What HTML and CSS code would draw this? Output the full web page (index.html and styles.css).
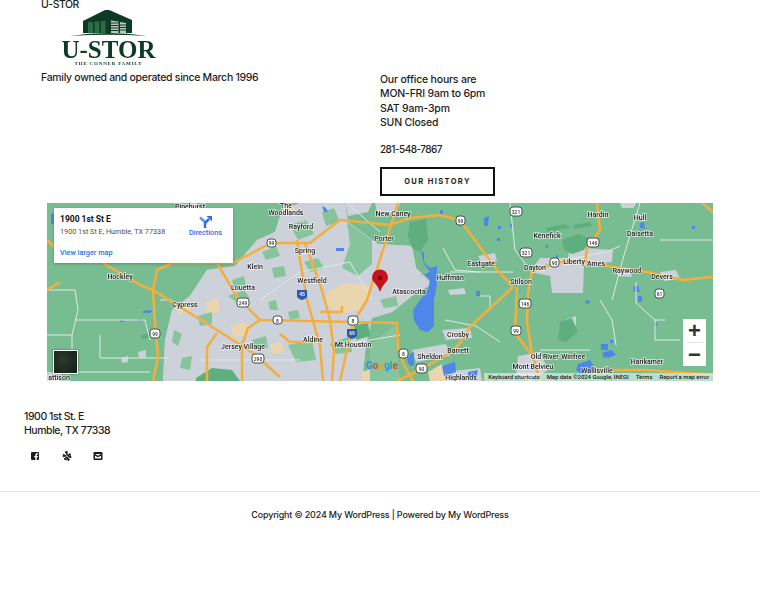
FILE: index.html
```html
<!DOCTYPE html>
<html lang="en">
<head>
    <meta charset="UTF-8">
    <meta name="viewport" content="width=device-width, initial-scale=1.0">
    <title>U-STOR</title>
    <link rel="stylesheet" href="styles.css">
</head>
<body>
    <div class="intro">
        <div class="intro-left">
            <div class="site-title">U-STOR</div>
            <svg class="logo" viewBox="62 10 94 56" width="94" height="56">
                <path class="logo-dark" d="M83 21L107 9 132 20V33H83Z"/>
                <path class="logo-dark" d="M70 36Q108 30 147 36 108 33.500 70 36Z"/>
                <path class="logo-win" d="M88 22h5v11h-5zM94.500 21.500h5V33h-5zM101 21h4.500V33H101z"/>
                <path class="logo-light" d="M111 20.500l7.500 1V33H111zM120 22l6 1V33h-6z"/>
                <path class="logo-line" d="M111 23h7.500M111 25.500h7.500M111 28h7.500M111 30.500h7.500M120 25h6M120 27.500h6M120 30h6"/>
                <text class="logo-name" x="108.500" y="57.500" text-anchor="middle">U-STOR</text>
                <text class="logo-sub" x="108.500" y="65" text-anchor="middle">THE CONNER FAMILY</text>
            </svg>
            <p class="tagline">Family owned and operated since March 1996</p>
        </div>
        <div class="intro-right">
            <p class="hours">Our office hours are<br>MON-FRI 9am to 6pm<br>SAT 9am-3pm<br>SUN Closed</p>
            <p class="phone">281-548-7867</p>
            <a class="history-btn" href="#">OUR HISTORY</a>
        </div>
    </div>

    <div class="map">
        <svg class="map-art" viewBox="47 203 666 178" width="666" height="178">
            <defs>
                <pattern id="streets" width="13" height="11" patternUnits="userSpaceOnUse">
                    <path d="M0 0H13M0 0V11" class="street-line"/>
                </pattern>
            </defs>
            <rect class="land" x="47" y="203" width="666" height="178"/>
            <!-- towns -->
            <g class="urban">
                <path id="metro" d="M163 381L165 340 172 310 190 296 207 270 235 266 257 240 275 232 282 210 300 203 345 203 348 222 378 244 412 246 416 268 432 284 412 296 392 312 372 318 366 345 362 381Z"/>
                <path d="M345 203H372L368 212 348 216ZM375 203H400L396 214 378 216Z"/>
                <path d="M570 247L613 250 612 262 584 266 583 293 552 293 550 276 530 272 540 258 568 258Z"/>
                <path d="M442 330L470 328 472 338 446 340ZM412 350L446 344 450 356 416 362ZM444 372L480 368 482 381H446ZM518 356L540 352 548 370 530 381 516 376Z"/>
                <path d="M180 205L196 203 200 210 186 212ZM47 372H62V381H47Z"/>
                <path d="M478 256L495 253 497 261 482 263ZM448 290L464 288 466 294 450 295ZM660 272L676 270 680 279 664 281ZM616 268L630 270 632 277 618 276Z"/>
                <path d="M121 358L128 356 128 362 122 363ZM138 352L146 350 146 357 139 358ZM565 320L576 316 576 326 566 330ZM620 203H636L634 208H622Z"/>
            </g>
            <use href="#metro" fill="url(#streets)"/>
            <g class="tan">
                <path d="M327 292L345 283 370 286 366 304 358 310 340 314 326 304Z"/>
                <path d="M358 246L368 244 372 252 362 255Z"/>
                <path d="M176 306L188 302 190 312 178 314ZM205 302L218 298 220 312 208 314ZM230 326L246 322 250 334 234 338ZM270 345L282 342 284 352 272 354Z"/>
                <path d="M428 372L442 364 448 381H430ZM362 372L374 368 380 381H362ZM282 205L292 204 296 212 284 214Z"/>
            </g>
            <g class="patch">
                <path d="M410 222L426 219 428 240 420 252 412 248 408 236Z"/>
                <path d="M562 240L578 234 590 238 584 250 572 254 564 250Z"/>
                <path d="M560 322L572 318 578 332 566 342 558 340Z"/>
                <path d="M196 378L212 368 232 370 240 381H196Z"/>
                <path d="M354 326L368 322 370 336 356 340Z"/>
                <path d="M545 228L566 224 570 228 548 232ZM573 225L590 222 592 226 575 229Z"/>
                <path d="M141 335L156 332 156 337 142 339Z"/>
            </g>
            <g class="lightgreen">
                <path d="M347 222L372 240 372 264 358 276 342 268 350 244Z"/>
                <path d="M290 225L306 220 314 234 298 240ZM322 212L334 208 340 222 326 226Z"/>
                <path d="M304 262L318 258 324 268 310 272ZM262 252L276 246 280 256 266 260ZM272 268L284 266 286 276 274 278Z"/>
                <path d="M228 296L244 290 250 298 236 302ZM198 316L212 312 212 324 200 326ZM252 340L266 336 268 348 256 350ZM288 345L312 340 316 360 296 362ZM330 344L350 336 352 352 336 354ZM288 312L298 310 300 318 290 320ZM370 345L395 325 400 381 370 381ZM380 300L396 296 398 306 384 308Z"/>
                <path d="M174 330L182 334 178 346 172 342ZM182 358L192 356 190 370 180 368ZM232 280L244 276 246 286 234 288ZM268 302L276 300 278 310 270 310Z"/>
            </g>
            <!-- water -->
            <g class="water">
                <path d="M421 251L424 253 424 262 430 268 437 266 437 284 434 300 434 326 428 332 420 330 414 320 413 310 420 300 428 290 430 280 424 274 414 278 430 272 424 264Z"/>
                <path d="M410 354L414 352 414 365 410 366 407 360ZM442 366L455 362 456 372 444 376ZM468 372L478 370 476 378 468 378Z"/>
                <path d="M601 344L608 344 608 350 601 350ZM602 353L606 352 610 356 604 358ZM578 364L590 360 596 370 584 376 576 370ZM604 352L612 350 616 355 608 358Z"/>
                <path d="M484 218L489 216 488 226 484 226ZM51 214L56 213 56 224 51 224ZM640 223L644 222 645 229 640 228ZM633 287L638 285 640 292 634 292Z"/>
                <path d="M638 296L642 296 642 302 638 302ZM638 376h3v-3h-3zM143 311L153 310 150 313 143 313ZM137 319h5v2h-5zM120 320h4v2h-4z"/>
                <path d="M322 206L326 208 328 212 324 212ZM336 248h8v3h-8zM476 296h4v-5h-4zM440 210h3v5h-3zM497 238h3v3h-3zM586 300l4 1-1 3-4-1z"/>
                <path d="M510 224h2v3h-2zM498 226h3v3h-3zM556 255h2v3h-2zM546 245h2v3h-2zM610 340h3v3h-3zM654 323h3v3h-3zM692 226h3v3h-3z"/>
            </g>
            <!-- minor roads -->
            <g class="minor">
                <path d="M47 290H75L78 310 72 335H47M72 335V372H150M75 320H145L150 340M100 335V358H168"/>
                <path d="M347 203L380 232M510 203L515 250 530 270M640 203L624 255 612 300M443 248L455 270 480 272"/>
                <path d="M636 282V303L655 320 665 320M655 320V340H680M600 300L612 320 616 345M660 240H713"/>
                <path d="M445 320L476 326 500 342M540 350L590 350M450 272H513M480 296H490V310M200 360H300M260 300L300 272 350 262"/>
                <path d="M340 345L400 335M548 263L606 252 620 246M172 300H160M350 262L372 300"/>
            </g>
            <!-- highways -->
            <g class="roads">
                <path d="M398 203L367 300 353 323 340 381"/>
                <path d="M300 243L310 243 340 220 360 222 390 225 410 218 440 215 460 220 480 247 497 270 513 287 470 327 460 343 450 353 420 370 397 381"/>
                <path d="M153 290L155 323 158 357 153 381"/>
                <path d="M103 263L140 285 153 290 217 330 253 353 280 377"/>
                <path d="M153 290L157 270 173 263 233 263 271 243 300 243"/>
                <path d="M217 263L237 297 260 320 397 323 398 347 403 363 413 381"/>
                <path d="M260 320L248 328 242 345 242 381"/>
                <path d="M217 333L207 347 207 381"/>
                <path d="M297 240L300 260 307 300 320 345 323 381"/>
                <path d="M305 243L322 290 330 320 334 350 332 381"/>
                <path d="M320 312H342L342 306"/>
                <path d="M280 334L290 342 320 342"/>
                <path d="M597 203L600 230 587 248 585 263"/>
                <path d="M530 272L557 262 583 261 613 267 647 272 683 280 713 277"/>
                <path d="M532 272L528 293 527 323 532 353 540 381"/>
                <path d="M517 287L515 333 530 353"/>
                <path d="M593 370H647L713 375"/>
                <path d="M702 203L713 212"/>
                <path d="M47 240L65 258M47 290L60 282"/>
            </g>
            <!-- route shields -->
            <g class="shields">
                <rect x="510" y="207" width="12" height="9" rx="3"/>
                <rect x="520" y="248" width="12" height="9" rx="3"/>
                <rect x="456" y="216" width="9" height="9" rx="3"/>
                <rect x="587" y="238" width="12" height="9" rx="3"/>
                <rect x="550" y="258" width="9" height="9" rx="3"/>
                <rect x="511" y="326" width="10" height="9" rx="3"/>
                <rect x="519" y="299" width="12" height="9" rx="3"/>
                <rect x="655" y="289" width="9" height="9" rx="3"/>
                <rect x="267" y="239" width="9" height="8" rx="3"/>
                <rect x="237" y="298" width="12" height="9" rx="3"/>
                <rect x="150" y="329" width="10" height="9" rx="3"/>
                <rect x="252" y="354" width="12" height="9" rx="3"/>
                <rect x="273" y="316" width="9" height="8" rx="3"/>
                <rect x="348" y="316" width="10" height="9" rx="3"/>
                <rect x="399" y="349" width="9" height="9" rx="3"/>
                <rect x="416" y="364" width="11" height="9" rx="3"/>
            </g>
            <g class="shield-text">
                <text x="516" y="214">321</text>
                <text x="526" y="255">321</text>
                <text x="460.500" y="223">99</text>
                <text x="593" y="245">146</text>
                <text x="554.500" y="265">90</text>
                <text x="516" y="333">99</text>
                <text x="525" y="306">146</text>
                <text x="659.500" y="296">61</text>
                <text x="271.500" y="245">99</text>
                <text x="243" y="305">249</text>
                <text x="155" y="336">99</text>
                <text x="258" y="361">290</text>
                <text x="277.500" y="323">8</text>
                <text x="353" y="323">8</text>
                <text x="403.500" y="356">8</text>
                <text x="421.500" y="371">90</text>
            </g>
            <g class="interstate">
                <path d="M297 290h10v7q-5 6-10 0z"/>
                <path d="M347 329h10v7q-5 6-10 0z"/>
                <text x="302" y="296">45</text>
                <text x="352" y="335">69</text>
            </g>
            <!-- place names -->
            <g class="places">
                <text x="190" y="209">Pinehurst</text>
                <text x="286" y="208">The</text>
                <text x="286" y="215">Woodlands</text>
                <text x="301" y="229">Rayford</text>
                <text x="305" y="253">Spring</text>
                <text x="255" y="269">Klein</text>
                <text x="393" y="216">New Caney</text>
                <text x="384" y="241">Porter</text>
                <text x="312" y="283">Westfield</text>
                <text x="243" y="290">Louetta</text>
                <text x="120" y="279">Hockley</text>
                <text x="185" y="307">Cypress</text>
                <text x="243" y="349">Jersey Village</text>
                <text x="313" y="342">Aldine</text>
                <text x="353" y="347">Mt Houston</text>
                <text x="409" y="294">Atascocita</text>
                <text x="450" y="280">Huffman</text>
                <text x="481" y="266">Eastgate</text>
                <text x="547" y="238">Kenefick</text>
                <text x="598" y="217">Hardin</text>
                <text x="640" y="220">Hull</text>
                <text x="640" y="236">Daisetta</text>
                <text x="535" y="270">Dayton</text>
                <text x="574" y="264">Liberty</text>
                <text x="596" y="266">Ames</text>
                <text x="627" y="273">Raywood</text>
                <text x="662" y="279">Devers</text>
                <text x="521" y="284">Stilson</text>
                <text x="458" y="337">Crosby</text>
                <text x="458" y="353">Barrett</text>
                <text x="430" y="359">Sheldon</text>
                <text x="558" y="359">Old River-Winfree</text>
                <text x="533" y="369">Mont Belvieu</text>
                <text x="647" y="364">Hankamer</text>
                <text x="59" y="380">attison</text>
                <text x="461" y="380">Highlands</text>
                <text x="597" y="373">Wallisville</text>
            </g>
            <!-- pin -->
            <path class="pin" d="M380 292C377 283 372 282 372 277.500A8 8 0 0 1 388 277.500C388 282 383 283 380 292Z"/>
            <rect class="pin-dot" x="378" y="276" width="4" height="4"/>
            <!-- google mark -->
            <text class="g-mark" x="366" y="369"><tspan class="g-blue">G</tspan><tspan class="g-red">o</tspan><tspan class="g-yellow">o</tspan><tspan class="g-blue">g</tspan><tspan class="g-green">l</tspan><tspan class="g-red">e</tspan></text>
        </svg>

        <div class="map-card">
            <div class="map-card-text">
                <div class="map-card-title">1900 1st St E</div>
                <div class="map-card-addr">1900 1st St E, Humble, TX 77338</div>
                <a class="map-link map-larger" href="#">View larger map</a>
            </div>
            <a class="map-link map-dir" href="#">
                <svg viewBox="0 0 13 12" width="13" height="12">
                    <path class="dir-arm" d="M1 1.500L6 6"/>
                    <path class="dir-stem" d="M6 12V7L10 3"/>
                    <path class="dir-head" d="M7.500 0H13V5.500Z"/>
                </svg>
                <span>Directions</span>
            </a>
        </div>

        <div class="map-thumb"></div>

        <div class="map-zoom">
            <span class="zoom-btn">+</span>
            <span class="zoom-sep"></span>
            <span class="zoom-btn">&minus;</span>
        </div>

        <div class="map-attrib">
            <span>Keyboard shortcuts</span>
            <span>Map data &copy;2024 Google, INEGI</span>
            <span>Terms</span>
            <span>Report a map error</span>
        </div>
    </div>

    <div class="contact">
        <p class="address">1900 1st St. E<br>Humble, TX 77338</p>
        <div class="social">
            <a href="#"><svg viewBox="0 0 10 10" width="10" height="10"><path class="social-icon" d="M2 1h6a1 1 0 0 1 1 1v6a1 1 0 0 1-1 1H6.800V6.200h1l.2-1.300H6.800V4.200c0-.4.2-.7.700-.7h.6V2.400c-1.700-.3-2.800.2-2.800 1.700v.8H4.200v1.300h1.100V9H2a1 1 0 0 1-1-1V2a1 1 0 0 1 1-1z"/></svg></a>
            <a href="#"><svg viewBox="0 0 10 10" width="10" height="10"><path class="social-icon social-yelp" d="M3.200 .8L5.200 .4 5.300 4.600zM1.300 3.200L4.400 5 1.200 5.800zM2 7.900L4.500 5.900 4.300 9zM5.200 6L7.600 8.800 5.800 9.600zM5.800 5.500L8.900 4.900 8.800 7zM5.700 4.700L7.700 2.400 8.800 4z"/></svg></a>
            <a href="#"><svg viewBox="0 0 10 10" width="10" height="10"><path class="social-icon" fill-rule="evenodd" d="M1.500 1h7a1 1 0 0 1 1 1v6a1 1 0 0 1-1 1h-7a1 1 0 0 1-1-1V2a1 1 0 0 1 1-1zM2 3L5 4.800 8 3zM2 4.800V7.500h6V4.800L5 6.300z"/></svg></a>
        </div>
    </div>

    <footer class="site-footer">
        <p>Copyright &copy; 2024 My WordPress | Powered by My WordPress</p>
    </footer>
</body>
</html>
```

FILE: styles.css
```css
/* General Reset */
* {
    margin: 0;
    padding: 0;
    box-sizing: border-box;
}

body {
    font-family: Inter, "Open Sans", Arial, sans-serif;
    font-size: 10.500px;
    font-weight: 500;
    color: #1d1d1d;
    background-color: #ffffff;
}

a {
    color: inherit;
    text-decoration: none;
}

/* Top section */
.intro {
    display: grid;
    grid-template-columns: 339px 1fr;
    padding-left: 41px;
    height: 203px;
}

.site-title {
    line-height: 10px;
    letter-spacing: -0.5px;
}

.logo {
    display: block;
    margin-left: 21px;
    filter: blur(0.3px);
}

.logo-dark {
    fill: #0c3a22;
}

.logo-win {
    fill: #2d6a47;
}

.logo-light {
    fill: #b9c7bd;
}

.logo-line {
    fill: none;
    stroke: #0c3a22;
    stroke-width: 1;
}

.logo-name {
    font-family: "Liberation Serif", serif;
    font-size: 25px;
    font-weight: 700;
    fill: #0c3a22;
}

.logo-sub {
    font-family: "Liberation Serif", serif;
    font-size: 5px;
    font-weight: 700;
    letter-spacing: 0.8px;
    fill: #0c3a22;
}

.tagline {
    margin-top: 4px;
    line-height: 16px;
    letter-spacing: -0.3px;
}

.intro-right {
    padding-top: 73px;
}

.hours {
    line-height: 14.400px;
    letter-spacing: -0.2px;
}

.phone {
    margin-top: 11px;
    font-size: 10px;
    line-height: 14px;
    letter-spacing: -0.55px;
}

.history-btn {
    display: flex;
    align-items: center;
    justify-content: center;
    width: 115px;
    height: 29px;
    margin-top: 11px;
    border: 2px solid #111111;
    font-size: 7.500px;
    font-weight: 700;
    letter-spacing: 1.400px;
}

/* Map */
.map {
    position: relative;
    width: 666px;
    height: 178px;
    margin-left: 47px;
    overflow: hidden;
}

.map-art {
    display: block;
    filter: blur(0.4px);
}

.land {
    fill: #78bd92;
}

.urban path {
    fill: #cdd1d9;
}

.street-line {
    fill: none;
    stroke: #eef0f3;
    stroke-width: 1;
}

.tan path {
    fill: #e9d6ae;
}

.patch path {
    fill: #5fae7d;
}

.lightgreen path {
    fill: #86c59c;
}

.water path {
    fill: #4f86ea;
}

.minor path {
    fill: none;
    stroke: #dfeae6;
    stroke-width: 1;
}

.roads path {
    fill: none;
    stroke: #f5ae3c;
    stroke-width: 2.500;
    stroke-linejoin: round;
}

.shields rect {
    fill: #ffffff;
    stroke: #44504a;
    stroke-width: 1;
}

.shield-text text {
    font-family: Roboto, sans-serif;
    font-size: 5px;
    font-weight: 500;
    text-anchor: middle;
    fill: #333333;
}

.interstate path {
    fill: #2a5bb0;
}

.interstate text {
    font-family: Roboto, sans-serif;
    font-size: 5px;
    font-weight: 500;
    text-anchor: middle;
    fill: #ffffff;
}

.places text {
    font-family: Roboto, sans-serif;
    font-size: 7px;
    font-weight: 500;
    text-anchor: middle;
    fill: #222222;
    stroke: #ffffff;
    stroke-width: 1.500px;
    stroke-opacity: 0.7;
    paint-order: stroke;
}

.pin {
    fill: #c5121b;
}

.pin-dot {
    fill: #6f0d12;
}

.g-mark {
    font-family: Roboto, sans-serif;
    font-size: 10px;
    font-weight: 700;
}

.g-blue {
    fill: #4285f4;
}

.g-red {
    fill: #db4437;
}

.g-yellow {
    fill: #e8a80c;
}

.g-green {
    fill: #34a853;
}

.map-card {
    position: absolute;
    top: 5px;
    left: 7px;
    display: flex;
    width: 179px;
    height: 55px;
    padding: 6px 0 0 6px;
    background: #ffffff;
    font-family: Roboto, sans-serif;
    box-shadow: 0 1px 3px rgba(0, 0, 0, 0.25);
}

.map-card-text {
    display: flex;
    flex-direction: column;
    width: 129px;
}

.map-card-title {
    font-size: 8.500px;
    font-weight: 700;
    line-height: 11px;
    color: #111111;
}

.map-card-addr {
    margin-top: 2px;
    font-size: 7.250px;
    font-weight: 400;
    line-height: 10px;
    color: #4f4f4f;
}

.map-link {
    color: #1a73e8;
    font-size: 7.250px;
    font-weight: 500;
}

.map-larger {
    margin-top: 11px;
    line-height: 10px;
}

.map-dir {
    display: flex;
    flex-direction: column;
    align-items: center;
    width: 33px;
    padding-top: 2px;
    line-height: 10px;
}

.dir-arm {
    fill: none;
    stroke: #5b9bec;
    stroke-width: 2.500;
}

.dir-stem {
    fill: none;
    stroke: #2f6fe0;
    stroke-width: 2.500;
}

.dir-head {
    fill: #2f6fe0;
}

.map-thumb {
    position: absolute;
    left: 6px;
    top: 147px;
    width: 25px;
    height: 24px;
    border: 1px solid #ffffff;
    background: radial-gradient(circle at 40% 40%, #2c3a2c, #141c16);
    box-shadow: 0 0 2px rgba(0, 0, 0, 0.5);
}

.map-zoom {
    position: absolute;
    left: 636px;
    top: 116px;
    display: flex;
    flex-direction: column;
    align-items: center;
    width: 23px;
    height: 47px;
    background: #ffffff;
}

.zoom-btn {
    height: 23px;
    font-family: "Liberation Sans", Arial, sans-serif;
    font-size: 22px;
    font-weight: 700;
    line-height: 23px;
    color: #333333;
}

.zoom-sep {
    width: 17px;
    height: 1px;
    background: #e3e3e3;
}

.map-attrib {
    position: absolute;
    right: 0;
    bottom: 0;
    display: flex;
    gap: 7px;
    padding: 0 4px;
    background: rgba(255, 255, 255, 0.5);
    font-family: Roboto, sans-serif;
    font-size: 5.900px;
    font-weight: 500;
    line-height: 8px;
    color: #222222;
}

/* Address and social links */
.contact {
    padding: 29px 0 0 24px;
}

.address {
    line-height: 14.400px;
    letter-spacing: -0.45px;
}

.social {
    display: flex;
    gap: 21.500px;
    margin-top: 12px;
    padding-left: 6px;
}

.social a {
    display: block;
    width: 10px;
    height: 10px;
}

.social svg {
    display: block;
}

.social-icon {
    fill: #1d1d1d;
}

.social-yelp {
    stroke: #1d1d1d;
    stroke-width: 0.8;
    stroke-linejoin: round;
}

/* Footer */
.site-footer {
    margin-top: 30px;
    padding-top: 16px;
    border-top: 1px solid #dbe9f0;
    text-align: center;
    font-size: 9px;
    line-height: 14px;
    letter-spacing: -0.18px;
}
```
